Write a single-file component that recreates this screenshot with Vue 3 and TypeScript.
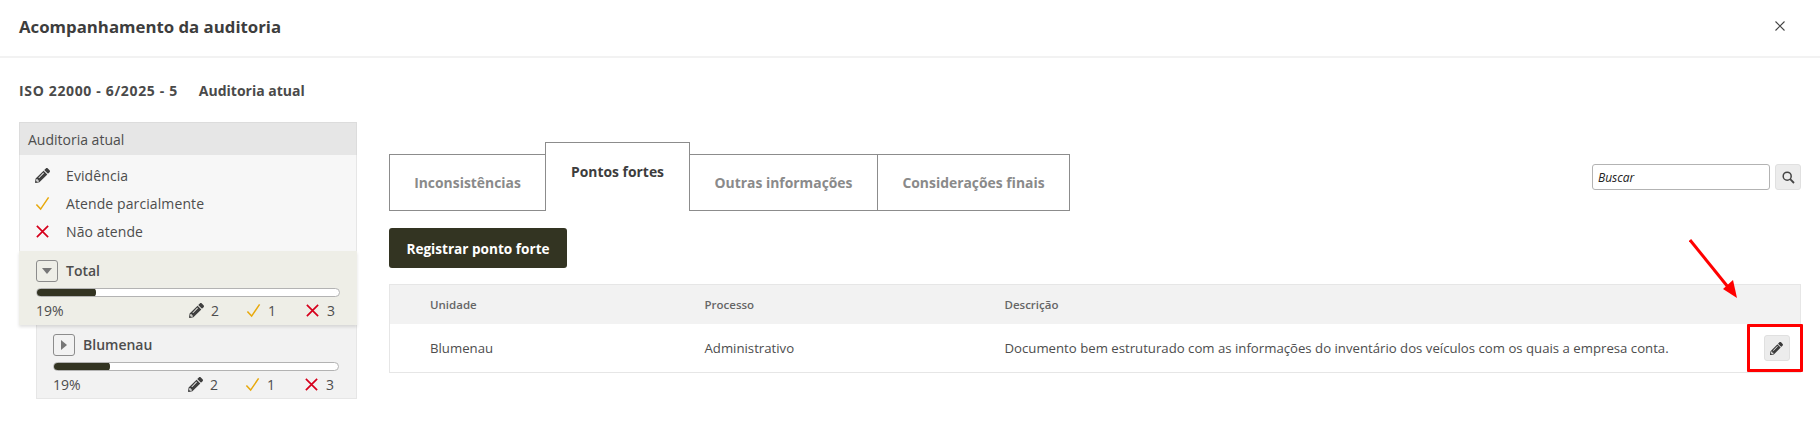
<template>
  <div class="modal">
    <header class="modal-header">
      <h1 class="modal-title">Acompanhamento da auditoria</h1>
      <button class="close-btn" aria-label="Fechar">
        <svg width="10" height="10" viewBox="0 0 10 10"><path d="M0.5 0.5 9.5 9.5M9.5 0.5 0.5 9.5" stroke="#444" stroke-width="1.1" fill="none" /></svg>
      </button>
    </header>

    <div class="modal-body">
      <div class="subtitle">
        <span class="audit-code">ISO 22000 - 6/2025 - 5</span>
        <span>Auditoria atual</span>
      </div>

      <div class="content">
        <aside class="sidebar">
          <div class="side-title">Auditoria atual</div>
          <ul class="legend">
            <li>
              <svg class="ico pencil" viewBox="0 0 512 512"><path :d="pencilPath" /></svg>
              Evidência
            </li>
            <li>
              <svg class="ico" viewBox="0 0 16 16"><path d="M1.5 9 6 14 14.5 1.5" class="check" /></svg>
              Atende parcialmente
            </li>
            <li>
              <svg class="ico" viewBox="0 0 16 16"><path d="M2 2 14 14M14 2 2 14" class="cross" /></svg>
              Não atende
            </li>
          </ul>

          <div v-for="item in units" :key="item.name" class="unit" :class="item.kind">
            <div class="unit-head">
              <span class="toggle">
                <svg v-if="item.kind === 'total'" width="10" height="6" viewBox="0 0 10 6"><path d="M0 0H10L5 6Z" fill="#777" /></svg>
                <svg v-else width="6" height="10" viewBox="0 0 6 10"><path d="M0 0V10L6 5Z" fill="#777" /></svg>
              </span>
              <strong>{{ item.name }}</strong>
            </div>
            <div class="progress"><div class="progress-fill" :style="{ width: item.fill + 'px' }"></div></div>
            <div class="stats">
              <span class="pct">{{ item.pct }}%</span>
              <svg class="stat-ico pencil" viewBox="0 0 512 512"><path :d="pencilPath" /></svg>
              <span class="num n1">{{ item.evidence }}</span>
              <svg class="stat-ico ck" viewBox="0 0 16 16"><path d="M1.5 9 6 14 14.5 1.5" class="check" /></svg>
              <span class="num n2">{{ item.partial }}</span>
              <svg class="stat-ico cr" viewBox="0 0 16 16"><path d="M2 2 14 14M14 2 2 14" class="cross" /></svg>
              <span class="num n3">{{ item.fail }}</span>
            </div>
          </div>
        </aside>

        <main class="main">
          <div class="toolbar">
            <div class="tabs">
              <div
                v-for="tab in tabs"
                :key="tab.label"
                class="tab"
                :class="{ active: tab.active }"
                :style="{ width: tab.width + 'px' }"
              >{{ tab.label }}</div>
            </div>
            <div class="search">
              <input class="search-input" placeholder="Buscar" />
              <button class="search-btn" aria-label="Buscar">
                <svg width="13" height="13" viewBox="0 0 13 13"><circle cx="5.2" cy="5.2" r="4" fill="none" stroke="#444" stroke-width="1.5" /><path d="M8.2 8.2 12 12" stroke="#444" stroke-width="1.8" /></svg>
              </button>
            </div>
          </div>

          <button class="register-btn">Registrar ponto forte</button>

          <table class="grid">
            <colgroup>
              <col class="c1" /><col class="c2" /><col /><col class="c4" />
            </colgroup>
            <thead>
              <tr>
                <th>Unidade</th>
                <th>Processo</th>
                <th>Descrição</th>
                <th></th>
              </tr>
            </thead>
            <tbody>
              <tr>
                <td>Blumenau</td>
                <td>Administrativo</td>
                <td>Documento bem estruturado com as informações do inventário dos veículos com os quais a empresa conta.</td>
                <td class="action">
                  <button class="edit-btn" aria-label="Editar">
                    <svg width="13" height="13" viewBox="0 0 512 512"><path :d="pencilPath" fill="#3a3a3a" /></svg>
                  </button>
                  <span class="highlight"></span>
                  <svg class="arrow" width="50" height="60" viewBox="0 0 50 60">
                    <path d="M1 1 43 53" stroke="#f00" stroke-width="3" fill="none" />
                    <path d="M48 59 34 50 44 41Z" fill="#f00" />
                  </svg>
                </td>
              </tr>
            </tbody>
          </table>
        </main>
      </div>
    </div>
  </div>
</template>

<script setup lang="ts">
interface UnitRow {
  name: string
  kind: 'total' | 'child'
  pct: number
  fill: number
  evidence: number
  partial: number
  fail: number
}

const pencilPath =
  'M497.9 142.1l-46.1 46.1c-4.7 4.7-12.3 4.7-17 0l-111-111c-4.7-4.7-4.7-12.3 0-17l46.1-46.1c18.7-18.7 49.1-18.7 67.9 0l60.1 60.1c18.8 18.7 18.8 49.1 0 67.9zM284.2 99.8L21.6 362.4.4 483.9c-2.9 16.4 11.4 30.6 27.8 27.8l121.5-21.3 262.6-262.6c4.7-4.7 4.7-12.3 0-17l-111-111c-4.8-4.7-12.4-4.7-17.1 0zM124.1 339.9c-5.5-5.5-5.5-14.3 0-19.8l154-154c5.5-5.5 14.3-5.5 19.8 0s5.5 14.3 0 19.8l-154 154c-5.5 5.5-14.3 5.5-19.8 0zM88 424h48v36.3l-64.5 11.3-31.1-31.1L51.7 376H88v48z'

const units: UnitRow[] = [
  { name: 'Total', kind: 'total', pct: 19, fill: 60, evidence: 2, partial: 1, fail: 3 },
  { name: 'Blumenau', kind: 'child', pct: 19, fill: 57, evidence: 2, partial: 1, fail: 3 },
]

const tabs = [
  { label: 'Inconsistências', width: 157, active: false },
  { label: 'Pontos fortes', width: 145, active: true },
  { label: 'Outras informações', width: 189, active: false },
  { label: 'Considerações finais', width: 193, active: false },
]
</script>

<style>
body {
  background: #fff;
}
</style>

<style scoped>
.modal {
  width: 1820px;
  height: 444px;
  font-family: "Open Sans", "Noto Sans", sans-serif;
  color: #4d4d4d;
  overflow: hidden;
}

.modal-header {
  height: 58px;
  box-sizing: border-box;
  border-bottom: 2px solid #f2f2f2;
  padding: 0 35px 4px 19px;
  display: flex;
  align-items: center;
  justify-content: space-between;
}

.modal-title {
  margin: 0;
  font-size: 16.8px;
  font-weight: 700;
  color: #3d3d3d;
}

.close-btn {
  border: none;
  background: none;
  padding: 0;
  display: flex;
}

.modal-body {
  padding: 23px 19px 0;
}

.subtitle {
  display: flex;
  gap: 21px;
  font-size: 14px;
  font-weight: 700;
  line-height: 20px;
  color: #4a4a4a;
}

.audit-code {
  letter-spacing: 0.65px;
}

.content {
  display: flex;
  gap: 32px;
  margin-top: 21px;
}

.sidebar {
  width: 338px;
  flex: none;
}

.side-title {
  height: 33px;
  box-sizing: border-box;
  background: #e6e6e6;
  border: 1px solid #dcdcdc;
  border-bottom: none;
  padding-left: 8px;
  font-size: 14px;
  line-height: 33px;
}

.legend {
  list-style: none;
  margin: 0;
  padding: 6px 0 5px 15px;
  background: #f7f7f7;
  border-left: 1px solid #e6e6e6;
  border-right: 1px solid #e6e6e6;
  font-size: 14px;
  letter-spacing: 0.1px;
}

.legend li {
  height: 28.3px;
  display: flex;
  align-items: center;
  gap: 16px;
}

.ico {
  width: 15px;
  height: 15px;
  flex: none;
}

.pencil {
  fill: #3f3f3f;
}

.check {
  fill: none;
  stroke: #e8a90c;
  stroke-width: 1.6;
}

.cross {
  fill: none;
  stroke: #d6001c;
  stroke-width: 1.8;
}

.unit {
  box-sizing: border-box;
  position: relative;
  height: 74px;
}

.unit.total {
  background: #eeeee7;
  padding: 9px 17px 0;
  box-shadow: 0 2px 3px rgba(0, 0, 0, 0.12);
  z-index: 1;
}

.unit.child {
  margin-left: 17px;
  background: #f2f2f2;
  border: 1px solid #e6e6e6;
  border-top: none;
  padding: 9px 17px 0 16px;
}

.unit-head {
  display: flex;
  align-items: center;
  gap: 8px;
  height: 22px;
  font-size: 14px;
}

.unit-head strong {
  font-weight: 600;
}

.toggle {
  width: 22px;
  height: 22px;
  box-sizing: border-box;
  border: 1px solid #8c8c8c;
  border-radius: 3px;
  display: flex;
  align-items: center;
  justify-content: center;
}

.progress {
  height: 9px;
  box-sizing: border-box;
  margin-top: 6px;
  background: #fff;
  border: 1px solid #b3b3b3;
  border-radius: 5px;
  overflow: hidden;
  display: flex;
}

.progress-fill {
  background: #333422;
  border-radius: 4px;
  margin: -1px 0 -1px -1px;
}

.stats {
  position: relative;
  display: flex;
  align-items: center;
  height: 20px;
  margin-top: 4px;
  font-size: 14px;
}

.pct {
  margin-right: auto;
}

.stat-ico {
  width: 15px;
  height: 15px;
  flex: none;
}

.num {
  flex: none;
  width: 9px;
  margin-left: 7px;
}

.ck {
  margin-left: 26px;
}

.cr {
  margin-left: 28px;
}

.n3 {
  margin-right: 4px;
}

.main {
  flex: 1;
  min-width: 0;
}

.toolbar {
  display: flex;
  justify-content: space-between;
  align-items: flex-start;
  padding-top: 20px;
}

.tabs {
  display: flex;
  align-items: flex-end;
  height: 69px;
}

.tab {
  height: 57px;
  box-sizing: border-box;
  border: 1px solid #8c8c8c;
  margin-right: -1px;
  display: flex;
  align-items: center;
  justify-content: center;
  font-size: 13.9px;
  font-weight: 700;
  color: #8a8a8a;
  background: #fff;
}

.tab.active {
  height: 69px;
  border-bottom: none;
  color: #3d3d3d;
  align-items: flex-start;
  padding-top: 19px;
  position: relative;
  z-index: 1;
}

.search {
  display: flex;
  gap: 5px;
  margin-top: 22px;
}

.search-input {
  width: 178px;
  height: 26px;
  box-sizing: border-box;
  border: 1px solid #b3b3b3;
  border-radius: 3px;
  padding: 0 5px;
  font-family: inherit;
  font-size: 12px;
  font-style: italic;
  outline: none;
}

.search-input::placeholder {
  color: #222;
  opacity: 1;
}

.search-btn {
  width: 26px;
  height: 26px;
  border: 1px solid #e0e0e0;
  border-radius: 3px;
  background: #ececec;
  padding: 0;
  display: flex;
  align-items: center;
  justify-content: center;
}

.register-btn {
  display: block;
  margin-top: 17px;
  width: 178px;
  height: 40px;
  border: none;
  border-radius: 3px;
  background: #333422;
  color: #fff;
  font-family: inherit;
  font-size: 13.6px;
  font-weight: 700;
  padding: 0;
}

.grid {
  margin-top: 16px;
  width: 1412px;
  border-collapse: collapse;
  table-layout: fixed;
  border: 1px solid #e6e6e6;
}

.c1 {
  width: 315px;
}

.c2 {
  width: 300px;
}

.c4 {
  width: 60px;
}

.grid th {
  height: 39px;
  padding: 0 0 0 40px;
  background: #f2f2f2;
  text-align: left;
  font-size: 11.5px;
  font-weight: 600;
  color: #666;
}

.grid th + th,
.grid td + td {
  padding-left: 0;
}

.grid td {
  height: 48px;
  padding: 0 0 0 40px;
  font-size: 13.2px;
  color: #4d4d4d;
}

.action {
  position: relative;
}

.edit-btn {
  display: flex;
  align-items: center;
  justify-content: center;
  width: 26px;
  height: 26px;
  margin-left: 23px;
  border: 1px solid #e0e0e0;
  border-radius: 3px;
  background: #ececec;
  padding: 0;
}

.highlight {
  position: absolute;
  left: 6px;
  top: 0;
  width: 56px;
  height: 48px;
  box-sizing: border-box;
  border: 3px solid #f00;
  border-radius: 1px;
}

.arrow {
  position: absolute;
  left: -52px;
  top: -85px;
}
</style>
